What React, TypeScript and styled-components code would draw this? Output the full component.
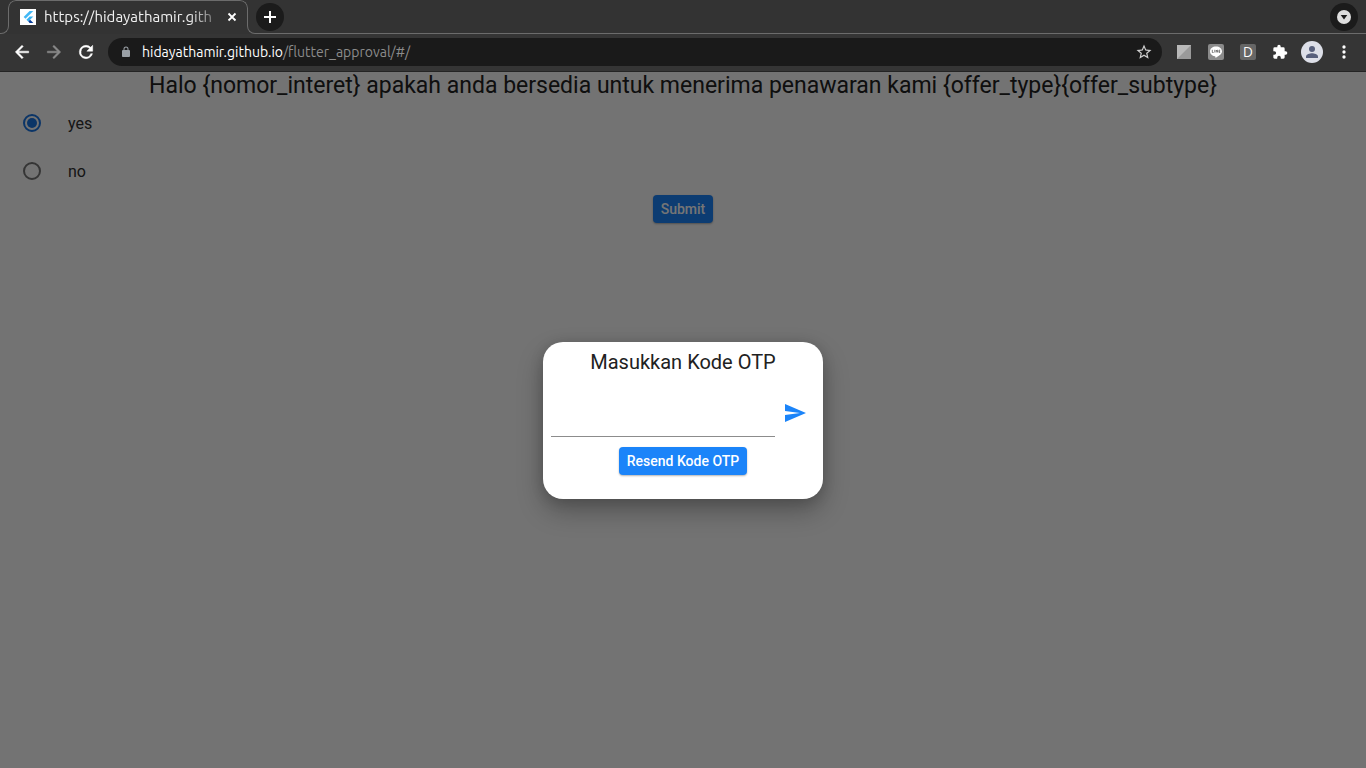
import React, { useState } from "react";
import styled, { createGlobalStyle } from "styled-components";

const GlobalStyle = createGlobalStyle`
  *, *::before, *::after { box-sizing: border-box; }
  body { margin: 0; background: #fafafa; font-family: Roboto, sans-serif; }
  button, input { font: inherit; }
`;

const Window = styled.div`
  display: flex;
  flex-direction: column;
  min-height: 100vh;
`;

const BrowserChrome = styled.header`
  background: #333333;
  color: #ffffff;
  font-family: Ubuntu, "Noto Sans", sans-serif;
  border-bottom: 1px solid #242424;
`;

const TabStrip = styled.div`
  display: flex;
  align-items: flex-end;
  height: 34px;
`;

const TabFlare = styled.span<{ $side: "left" | "right" }>`
  flex: none;
  width: ${(p) => (p.$side === "left" ? 9 : 8)}px;
  height: 9px;
  margin-${(p) => p.$side === "left" ? "right" : "left"}: -1px;
  border-bottom: 1px solid #6c6c6c;
  border-${(p) => (p.$side === "left" ? "right" : "left")}: 1px solid #6c6c6c;
  border-bottom-${(p) => (p.$side === "left" ? "right" : "left")}-radius: 8px;
`;

const Tab = styled.div`
  display: flex;
  align-items: center;
  flex: none;
  width: 240px;
  height: 34px;
  padding: 0 7px 1px 11px;
  border: 1px solid #6c6c6c;
  border-bottom: 0;
  border-radius: 8px 8px 0 0;
  mask: linear-gradient(#000, #000) center top / 100% 25px no-repeat,
    linear-gradient(#000, #000) center bottom / calc(100% - 2px) 9px no-repeat;
`;

const TabTitle = styled.span`
  flex: 1;
  min-width: 0;
  margin-left: 8px;
  white-space: nowrap;
  font-size: 15px;
  line-height: 20px;
  color: #f2f2f2;
  mask-image: linear-gradient(to right, #000 82%, transparent 104%);
`;

const PlainButton = styled.button`
  display: flex;
  align-items: center;
  justify-content: center;
  flex: none;
  padding: 0;
  border: 0;
  background: none;
  color: inherit;
  cursor: pointer;
`;

const TabClose = styled(PlainButton)`
  width: 16px;
  height: 16px;
  margin-left: 4px;
`;

const StripRest = styled.div`
  display: flex;
  flex: 1;
  align-items: center;
  justify-content: space-between;
  height: 34px;
  padding: 0 8px 0 1px;
  border-bottom: 1px solid #6c6c6c;
`;

const RoundButton = styled(PlainButton)`
  width: 28px;
  height: 28px;
  border-radius: 50%;
  background: #1b1b1b;
`;

const Toolbar = styled.div`
  display: flex;
  align-items: center;
  height: 37px;
  padding: 0 6px 1px;
  background: #353535;
`;

const ToolButton = styled(PlainButton)`
  width: 32px;
  height: 32px;
  &:disabled { color: #8a8a8a; cursor: default; }
`;

const AddressBar = styled.div`
  display: flex;
  align-items: center;
  flex: 1;
  min-width: 0;
  height: 28px;
  margin: 0 6px;
  padding: 0 2px 0 12px;
  border-radius: 14px;
  background: #1a1a1a;
`;

const Address = styled.span`
  flex: 1;
  min-width: 0;
  margin-left: 10px;
  overflow: hidden;
  white-space: nowrap;
  font-size: 14px;
  line-height: 20px;
`;

const AddressPath = styled.span`
  color: #8c8c8c;
`;

const Content = styled.div`
  position: relative;
  flex: 1;
  display: flex;
  flex-direction: column;
  background: #fafafa;
`;

const Survey = styled.form`
  display: flex;
  flex-direction: column;
  align-items: center;
`;

const Question = styled.h1`
  margin: 0;
  font-size: 23px;
  font-weight: 400;
  line-height: 27px;
  text-align: center;
  color: #212121;
`;

const Options = styled.div`
  align-self: stretch;
`;

const Option = styled.label`
  display: flex;
  align-items: center;
  gap: 27px;
  height: 48px;
  padding-left: 23px;
  font-size: 16px;
  line-height: 20px;
  color: #303030;
`;

const OptionText = styled.span`
  padding-top: 2px;
`;

const Radio = styled.input`
  appearance: none;
  display: grid;
  place-items: center;
  width: 18px;
  height: 18px;
  margin: 0;
  border: 2px solid #737373;
  border-radius: 50%;
  &:checked { border-color: #1a73e0; }
  &:checked::before {
    content: "";
    width: 10px;
    height: 10px;
    border-radius: 50%;
    background: #1a73e0;
  }
`;

const FilledButton = styled.button`
  height: 28px;
  padding: 0 8px;
  border: 0;
  border-radius: 4px;
  background: #1b84f9;
  color: #ffffff;
  font-size: 14px;
  font-weight: 500;
  line-height: 20px;
  box-shadow: 0 1px 2px rgba(0, 0, 0, 0.3);
  cursor: pointer;
`;

const Scrim = styled.div`
  position: absolute;
  inset: 0;
  display: flex;
  align-items: center;
  justify-content: center;
  background: rgba(0, 0, 0, 0.54);
`;

const Dialog = styled.form`
  display: flex;
  flex-direction: column;
  align-items: center;
  width: 280px;
  padding: 8px 8px 24px;
  border-radius: 20px;
  background: #ffffff;
  box-shadow: 0 12px 26px rgba(0, 0, 0, 0.28), 0 2px 14px rgba(0, 0, 0, 0.14);
`;

const DialogTitle = styled.h2`
  margin: 0;
  font-size: 20px;
  font-weight: 400;
  line-height: 24px;
  color: #212121;
`;

const CodeRow = styled.div`
  display: flex;
  align-items: center;
  align-self: stretch;
  margin: 15px 0 10px;
`;

const CodeInput = styled.input`
  flex: 1;
  min-width: 0;
  height: 48px;
  padding: 0;
  border: 0;
  border-bottom: 1px solid #8c8c8c;
  outline: 0;
  background: transparent;
  font-size: 16px;
`;

const SendButton = styled(PlainButton)`
  width: 40px;
  height: 48px;
  color: #1b84f9;
`;

const FlutterIcon = () => (
  <svg width="16" height="16" viewBox="0 0 16 16" aria-hidden="true">
    <path fill="#fff" d="M0 0h16v16H0z" />
    <g transform="translate(2.500 2) scale(.5)">
      <path fill="#42b8f5" d="M14.300 0L2.300 12 6 15.700 21.700 0z" />
      <path fill="#35b1f2" d="M14.300 11.100L7.900 17.500l3.700 3.700L21.700 11.100z" />
      <path fill="#0b3f9c" d="M11.600 21.200l2.700 2.800h7.400l-6.500-6.500z" />
    </g>
  </svg>
);

const Glyph = ({ d, size = 20, fill = "currentColor", bold = 0 }: { d: string; size?: number; fill?: string; bold?: number }) => (
  <svg width={size} height={size} viewBox="0 0 24 24" fill={fill} stroke={fill} strokeWidth={bold} aria-hidden="true">
    <path d={d} />
  </svg>
);

const glyphs = {
  back: "M20 11H7.830l5.590-5.590L12 4l-8 8 8 8 1.410-1.410L7.830 13H20v-2z",
  forward: "M12 4l-1.410 1.410L16.170 11H4v2h12.170l-5.580 5.590L12 20l8-8z",
  reload:
    "M17.650 6.350A7.960 7.960 0 0 0 12 4a8 8 0 1 0 7.730 10h-2.080A6 6 0 1 1 12 6c1.660 0 3.140.69 4.220 1.780L13 11h7V4l-2.350 2.350z",
  lock: "M18 8h-1V6A5 5 0 0 0 7 6v2H6a2 2 0 0 0-2 2v10c0 1.100.9 2 2 2h12a2 2 0 0 0 2-2V10a2 2 0 0 0-2-2zM9 6a3 3 0 0 1 6 0v2H9V6z",
  star: "M22 9.240l-7.190-.62L12 2 9.190 8.630 2 9.240l5.460 4.730L5.820 21 12 17.270 18.180 21l-1.630-7.030L22 9.240zM12 15.400l-3.760 2.270 1-4.280-3.320-2.880 4.380-.38L12 6.100l1.710 4.040 4.380.38-3.320 2.880 1 4.280L12 15.400z",
  puzzle:
    "M20.500 11H19V7a2 2 0 0 0-2-2h-4V3.500a2.500 2.500 0 0 0-5 0V5H4a2 2 0 0 0-2 2v3.800h1.500a2.700 2.700 0 0 1 0 5.400H2V20c0 1.100.9 2 2 2h3.800v-1.500a2.700 2.700 0 0 1 5.400 0V22H17a2 2 0 0 0 2-2v-4h1.500a2.500 2.500 0 0 0 0-5z",
  more: "M12 8a2 2 0 1 0 0-4 2 2 0 0 0 0 4zm0 2a2 2 0 1 0 0 4 2 2 0 0 0 0-4zm0 6a2 2 0 1 0 0 4 2 2 0 0 0 0-4z",
  send: "M2.010 21L23 12 2.010 3 2 10l15 2-15 2z",
};

const CloseIcon = () => (
  <svg width="16" height="16" viewBox="0 0 16 16" stroke="#fff" strokeWidth="1.800" aria-hidden="true">
    <path d="M4.500 4.500l7 7M11.500 4.500l-7 7" />
  </svg>
);

const PlusIcon = () => (
  <svg width="14" height="14" viewBox="0 0 14 14" stroke="#fff" strokeWidth="2" aria-hidden="true">
    <path d="M7 1v12M1 7h12" />
  </svg>
);

const TabSearchIcon = () => (
  <svg width="14" height="14" viewBox="0 0 14 14" aria-hidden="true">
    <circle cx="7" cy="7" r="7" fill="#dedede" />
    <path fill="#1b1b1b" d="M3.700 5h6.600L7 9.500z" />
  </svg>
);

const SlashedSquareIcon = () => (
  <svg width="14" height="14" viewBox="0 0 14 14" aria-hidden="true">
    <path fill="#9a9a9a" d="M0 0h14v14H0z" />
    <path fill="#b9b9b9" d="M0 0h14L0 14z" />
  </svg>
);

const ChatIcon = () => (
  <svg width="16" height="16" viewBox="0 0 16 16" aria-hidden="true">
    <rect width="16" height="16" rx="2" fill="#8b8b8b" />
    <path fill="#fff" d="M8 2.500c-3.400 0-6 2.100-6 4.900 0 2.400 2 4.300 4.800 4.800.8.200.6.700.5 1.600 2.500-1.200 6.700-3.700 6.700-6.400 0-2.800-2.600-4.900-6-4.900z" />
    <path stroke="#6f6f6f" fill="none" d="M4.300 5.800v2.700h1.300M6.800 5.800v2.700M8.200 8.500V6l1.400 2.300V5.800M12.200 6.200h-1.200v2.200h1.200M11 7.300h1.100" strokeWidth=".9" />
  </svg>
);

const LetterBadge = styled.span`
  width: 16px;
  height: 16px;
  border-radius: 2px;
  background: #666666;
  color: #ffffff;
  font-size: 14px;
  line-height: 16px;
  text-align: center;
`;

const AvatarIcon = () => (
  <svg width="22" height="22" viewBox="0 0 22 22" aria-hidden="true">
    <circle cx="11" cy="11" r="11" fill="#dddfe8" />
    <circle cx="11" cy="8" r="3" fill="#58607c" />
    <path fill="#58607c" d="M5 17v-1.500c0-2 4-3.200 6-3.200s6 1.200 6 3.200V17z" />
  </svg>
);

export default function App() {
  const [answer, setAnswer] = useState("yes");

  return (
    <Window>
      <GlobalStyle />
      <BrowserChrome>
        <TabStrip>
          <TabFlare $side="left" />
          <Tab>
            <FlutterIcon />
            <TabTitle>https://hidayathamir.gith</TabTitle>
            <TabClose aria-label="Close tab"><CloseIcon /></TabClose>
          </Tab>
          <TabFlare $side="right" />
          <StripRest>
            <RoundButton aria-label="New tab"><PlusIcon /></RoundButton>
            <RoundButton aria-label="Search tabs"><TabSearchIcon /></RoundButton>
          </StripRest>
        </TabStrip>
        <Toolbar>
          <ToolButton aria-label="Back"><Glyph d={glyphs.back} bold={0.6} /></ToolButton>
          <ToolButton aria-label="Forward" disabled><Glyph d={glyphs.forward} bold={0.6} /></ToolButton>
          <ToolButton aria-label="Reload"><Glyph d={glyphs.reload} bold={0.6} /></ToolButton>
          <AddressBar>
            <Glyph d={glyphs.lock} size={12} fill="#9aa0a6" />
            <Address>
              hidayathamir.github.io<AddressPath>/flutter_approval/#/</AddressPath>
            </Address>
            <ToolButton aria-label="Bookmark this page"><Glyph d={glyphs.star} size={18} fill="#d0d0d0" /></ToolButton>
          </AddressBar>
          <ToolButton aria-label="Extension"><SlashedSquareIcon /></ToolButton>
          <ToolButton aria-label="LINE"><ChatIcon /></ToolButton>
          <ToolButton aria-label="Dictionary"><LetterBadge>D</LetterBadge></ToolButton>
          <ToolButton aria-label="Extensions"><Glyph d={glyphs.puzzle} size={16} /></ToolButton>
          <ToolButton aria-label="Profile"><AvatarIcon /></ToolButton>
          <ToolButton aria-label="Menu"><Glyph d={glyphs.more} size={20} /></ToolButton>
        </Toolbar>
      </BrowserChrome>
      <Content>
        <Survey onSubmit={(e) => e.preventDefault()}>
          <Question>
            Halo {"{nomor_interet}"} apakah anda bersedia untuk menerima penawaran kami {"{offer_type}{offer_subtype}"}
          </Question>
          <Options>
            {["yes", "no"].map((value) => (
              <Option key={value}>
                <Radio
                  type="radio"
                  name="answer"
                  value={value}
                  checked={answer === value}
                  onChange={() => setAnswer(value)}
                />
                <OptionText>{value}</OptionText>
              </Option>
            ))}
          </Options>
          <FilledButton type="submit">Submit</FilledButton>
        </Survey>
        <Scrim>
          <Dialog role="dialog" aria-labelledby="otp-title" onSubmit={(e) => e.preventDefault()}>
            <DialogTitle id="otp-title">Masukkan Kode OTP</DialogTitle>
            <CodeRow>
              <CodeInput type="text" inputMode="numeric" aria-labelledby="otp-title" />
              <SendButton type="submit" aria-label="Send"><Glyph d={glyphs.send} size={24} /></SendButton>
            </CodeRow>
            <FilledButton type="button">Resend Kode OTP</FilledButton>
          </Dialog>
        </Scrim>
      </Content>
    </Window>
  );
}
